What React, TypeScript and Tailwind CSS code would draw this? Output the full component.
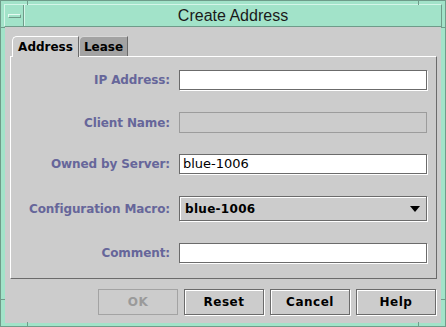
const labelCls =
  "w-[168px] shrink-0 text-right pr-[9px] text-[12px] font-bold text-[#66669a] tracking-[-0.1px]";
const fieldCls =
  "w-[248px] h-[20px] bg-white border border-[#6b6b6b] shadow-[1px_1px_0_#ffffff] px-[3px] text-[13px] leading-[18px] text-black";

function Row({ label, mt, h, children }: { label: string; mt: string; h: string; children: React.ReactNode }) {
  return (
    <div className={`flex items-center ${mt} ${h}`}>
      <div className={labelCls}>{label}</div>
      {children}
    </div>
  );
}

function Button({ label, disabled }: { label: string; disabled?: boolean }) {
  return (
    <div
      className={
        disabled
          ? "w-[80px] h-[26px] flex items-center justify-center border border-[#a3a3a3] text-[12px] font-bold text-[#9a9a9a] tracking-[0.5px]"
          : "w-[80px] h-[26px] flex items-center justify-center border border-[#6b6b6b] shadow-[inset_1px_1px_0_#ffffff,1px_1px_0_#ffffff] text-[12px] font-bold text-black tracking-[0.5px]"
      }
    >
      {label}
    </div>
  );
}

export default function App() {
  return (
    <div className="w-[446px] h-[327px] box-border bg-[#a2e3c9] border border-[#6f9c8a] p-[3px] flex flex-col font-['DejaVu_Sans',sans-serif] relative overflow-hidden">
      {/* frame resize notches */}
      <div className="absolute left-[26px] top-0 w-px h-[4px] bg-[#6f9c8a]" />
      <div className="absolute right-[26px] top-0 w-px h-[4px] bg-[#6f9c8a]" />
      <div className="absolute left-[26px] bottom-0 w-px h-[4px] bg-[#6f9c8a]" />
      <div className="absolute right-[26px] bottom-0 w-px h-[4px] bg-[#6f9c8a]" />
      <div className="absolute left-0 top-[26px] w-[4px] h-px bg-[#6f9c8a]" />
      <div className="absolute right-0 top-[26px] w-[4px] h-px bg-[#6f9c8a]" />
      <div className="absolute left-0 bottom-[26px] w-[4px] h-px bg-[#6f9c8a]" />
      <div className="absolute right-0 bottom-[26px] w-[4px] h-px bg-[#6f9c8a]" />

      {/* title bar */}
      <div className="h-[23px] flex border border-[#6f9c8a] border-t-[#d4f5e8] border-l-[#d4f5e8]">
        <div className="w-[19px] h-full flex items-center justify-center border-r border-[#6f9c8a]">
          <div className="w-[13px] h-[4px] border border-[#6f9c8a] border-t-[#e6fbf2] border-l-[#e6fbf2]" />
        </div>
        <div className="flex-1 flex items-center justify-center text-[16px] text-[#1a1a1a] font-['Liberation_Sans',Arial,sans-serif] border-l border-[#d4f5e8]">
          Create Address
        </div>
      </div>

      {/* content */}
      <div className="flex-1 bg-[#cccccc] mx-px flex flex-col pl-[5px] pr-[4px] pt-[9px]">
        {/* tabs */}
        <div className="flex items-end h-[20px] pl-[2px]">
          <div className="relative z-10 w-[67px] h-[21px] -mb-px bg-[#cccccc] border-t border-l border-white border-r border-r-[#6b6b6b] rounded-tl-[5px] flex items-center justify-center text-[12px] font-bold text-black">
            Address
          </div>
          <div className="w-[49px] h-[20px] bg-[#a3a3a3] border-t border-l border-[#d8d8d8] border-r border-r-[#6b6b6b] rounded-tl-[5px] flex items-center justify-center text-[12px] font-bold text-black">
            Lease
          </div>
        </div>

        {/* panel */}
        <div className="h-[223px] border border-white border-r-[#6b6b6b] border-b-[#6b6b6b] flex flex-col">
          <Row label="IP Address:" mt="mt-[13px]" h="h-[20px]">
            <div className={fieldCls} />
          </Row>
          <Row label="Client Name:" mt="mt-[22px]" h="h-[21px]">
            <div className="w-[248px] h-[21px] border border-[#9c9c9c]" />
          </Row>
          <Row label="Owned by Server:" mt="mt-[21px]" h="h-[20px]">
            <div className={fieldCls}>blue-1006</div>
          </Row>
          <Row label="Configuration Macro:" mt="mt-[22px]" h="h-[25px]">
            <div className="w-[248px] h-[25px] flex items-center justify-between pl-[5px] pr-[6px] border border-[#6b6b6b] shadow-[inset_1px_1px_0_#ffffff,1px_1px_0_#ffffff] text-[12px] font-bold text-black tracking-[0.3px]">
              <span>blue-1006</span>
              <svg width="10" height="6" viewBox="0 0 10 6">
                <polygon points="0,0 10,0 5,6" fill="#000" />
              </svg>
            </div>
          </Row>
          <Row label="Comment:" mt="mt-[22px]" h="h-[20px]">
            <div className={fieldCls} />
          </Row>
        </div>

        {/* buttons */}
        <div className="flex justify-end gap-[6px] mt-[10px] pr-px">
          <Button label="OK" disabled />
          <Button label="Reset" />
          <Button label="Cancel" />
          <Button label="Help" />
        </div>
      </div>
    </div>
  );
}
